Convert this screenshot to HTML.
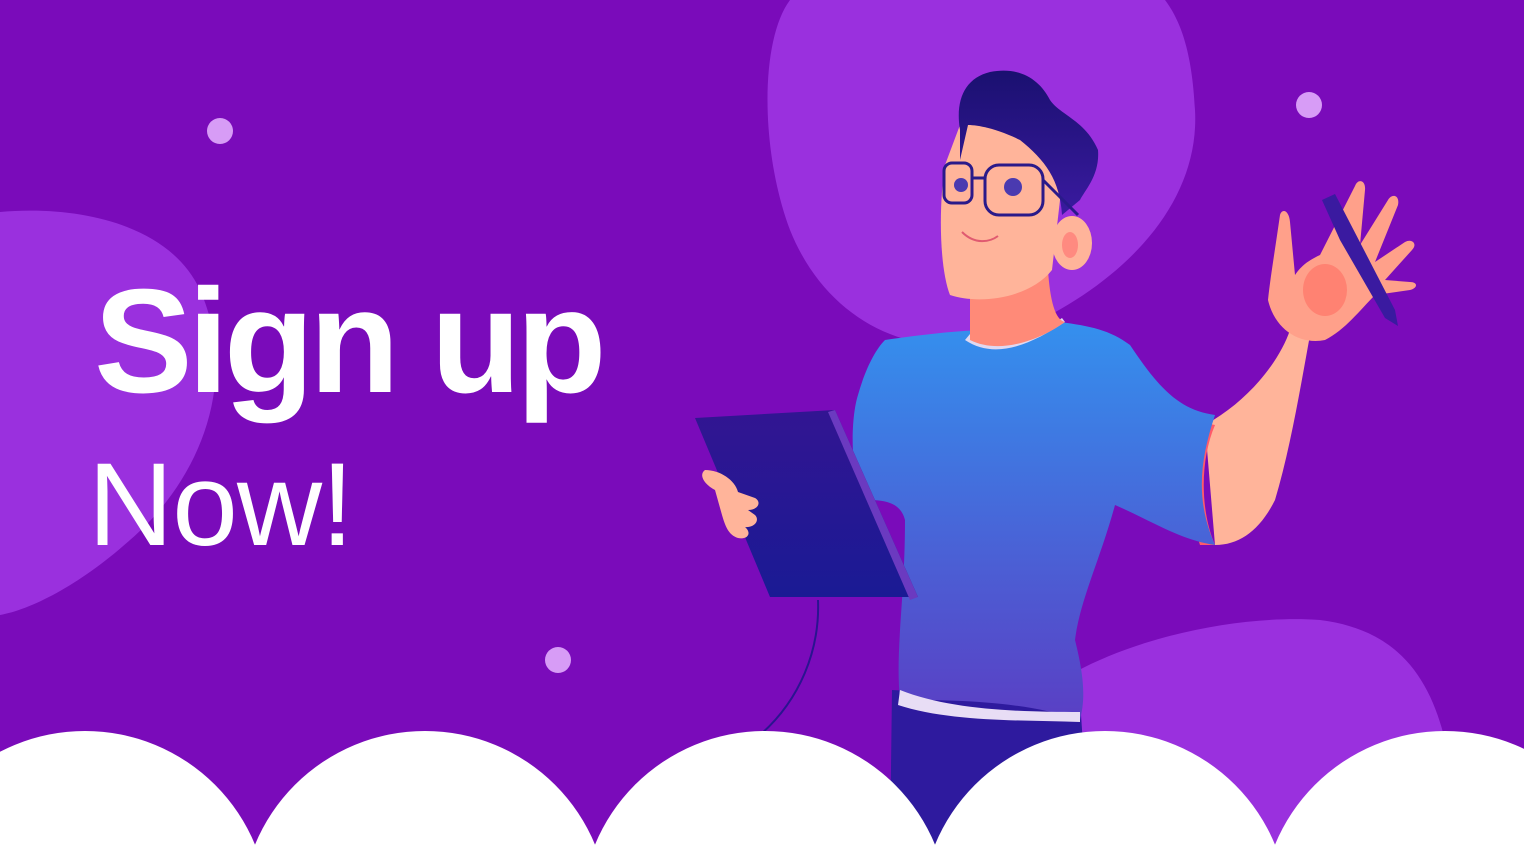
<!DOCTYPE html>
<html><head><meta charset="utf-8"><style>
html,body{margin:0;padding:0;width:1524px;height:847px;overflow:hidden;background:#7a0bba;position:relative}
svg{position:absolute;left:0;top:0;overflow:hidden}
.t{position:absolute;color:#fff;font-family:"Liberation Sans",sans-serif;white-space:nowrap}
</style></head><body>
<svg width="1524" height="847" viewBox="0 0 1524 847">
<defs>
<linearGradient id="sh" x1="0" y1="0" x2="0" y2="1"><stop offset="0" stop-color="#3490ee"/><stop offset="1" stop-color="#5a3fc4"/></linearGradient>
<linearGradient id="tb" x1="0" y1="0" x2="0" y2="1"><stop offset="0" stop-color="#321592"/><stop offset="1" stop-color="#1a1a94"/></linearGradient>
<linearGradient id="hr" x1="0" y1="0" x2="0" y2="1"><stop offset="0" stop-color="#1a1070"/><stop offset="1" stop-color="#3a1aa0"/></linearGradient>
</defs>
<rect width="1524" height="847" fill="#7a0bba"/>
<path d="M790,0 C760,40 760,150 790,230 C830,330 930,370 1020,330 C1130,280 1200,200 1195,110 C1192,50 1180,20 1165,0 Z" fill="#9a30de"/>
<path d="M0,212 C80,205 170,225 200,290 C240,380 200,480 130,540 C80,585 30,610 0,615 Z" fill="#9a30de"/>
<path d="M1075,672 C1150,632 1250,615 1320,620 C1400,630 1430,680 1445,740 L1445,847 L1075,847 Z" fill="#9a30de"/>
<circle cx="220" cy="131" r="13" fill="#d79cf6"/>
<circle cx="1309" cy="105" r="13" fill="#d79cf6"/>
<circle cx="558" cy="660" r="13" fill="#d79cf6"/>
<path d="M818,600 C820,650 800,700 760,735" stroke="#2a1490" stroke-width="2" fill="none"/>
<path d="M892,690 L1080,700 L1090,847 L890,847 Z" fill="#2e1a9e"/>
<path d="M1205,425 C1250,400 1280,360 1290,330 L1310,335 C1300,390 1290,450 1275,500 C1260,530 1240,545 1215,545 Z" fill="#ffb49a"/>
<path d="M1190,420 L1215,425 C1200,460 1200,510 1215,545 L1200,545 C1185,500 1185,460 1190,420 Z" fill="#ff5a6a"/>
<path d="M1280,215 C1275,250 1270,280 1268,300 C1275,330 1300,345 1325,340 C1345,330 1360,310 1375,295 L1410,290 C1418,288 1418,282 1410,282 L1385,280 L1412,250 C1418,244 1412,238 1405,242 L1375,262 L1398,205 C1400,195 1392,193 1388,200 L1360,245 L1365,190 C1366,180 1358,178 1355,186 L1320,255 C1305,262 1300,268 1295,275 L1290,222 C1289,210 1282,208 1280,215 Z" fill="#ffa08a"/>
<ellipse cx="1325" cy="290" rx="22" ry="26" fill="#ff8272"/>
<path d="M1322,200 L1335,194 L1395,310 L1398,326 L1385,318 L1340,240 Z" fill="#3a1aa0"/>
<path d="M885,340 C920,335 960,330 990,330 L1060,322 C1090,326 1110,330 1130,345 C1160,390 1180,410 1215,415 C1200,460 1195,500 1215,545 C1180,540 1150,520 1115,505 C1100,560 1080,600 1075,640 C1085,680 1085,700 1080,720 C1020,700 950,700 900,700 C895,650 905,600 905,520 C900,500 880,500 865,500 C850,480 850,420 858,395 C865,370 875,350 885,340 Z" fill="url(#sh)"/>
<path d="M965,340 C995,360 1030,345 1065,322 L1062,318 C1030,340 1000,352 970,334 Z" fill="#e0d8f0"/>
<path d="M900,690 C950,710 1020,712 1080,712 L1080,722 C1020,720 950,722 898,705 Z" fill="#e8ddf5"/>
<path d="M970,290 L1048,270 C1050,300 1055,320 1065,322 C1040,340 1000,355 970,340 Z" fill="#ff8a78"/>
<ellipse cx="1072" cy="243" rx="20" ry="27" fill="#ffb49a"/>
<ellipse cx="1070" cy="245" rx="8" ry="13" fill="#ff8a80"/>
<path d="M945,165 C938,210 940,270 950,295 C980,305 1030,298 1052,270 L1060,200 C1060,150 1010,115 960,125 Z" fill="#ffb49a"/>
<path d="M960,130 C955,100 965,78 990,72 C1020,66 1040,80 1050,100 C1060,115 1085,120 1098,150 C1100,175 1085,190 1080,200 L1062,215 C1060,180 1045,160 1020,140 C1000,130 980,125 968,125 L960,160 Z" fill="url(#hr)"/>
<g fill="none" stroke="#2a1a8a" stroke-width="3">
<rect x="944" y="163" width="28" height="40" rx="8"/>
<rect x="985" y="165" width="58" height="50" rx="14"/>
<path d="M972,178 L985,178 M1043,180 L1078,215"/>
</g>
<circle cx="1013" cy="187" r="9" fill="#4a3ab0"/>
<circle cx="961" cy="185" r="7" fill="#4a3ab0"/>
<path d="M962,232 C975,245 990,242 998,236" stroke="#e05a70" stroke-width="2" fill="none"/>
<path d="M695,418 L835,410 L918,597 L770,597 Z" fill="url(#tb)"/>
<path d="M835,410 L918,597 L910,600 L828,412 Z" fill="#6b3ac0"/>
<path d="M705,470 C720,470 735,480 738,492 L755,498 C762,502 758,510 748,510 L755,515 C760,520 755,528 745,527 C752,533 748,540 738,538 C728,535 725,525 722,515 L715,490 C705,485 698,475 705,470 Z" fill="#ffb49a"/>
<g fill="#fff">
<circle cx="85" cy="915" r="184"/><circle cx="425" cy="915" r="184"/><circle cx="765" cy="915" r="184"/><circle cx="1105" cy="915" r="184"/><circle cx="1445" cy="915" r="184"/>
</g>
</svg>
<div class="t" style="left:94px;top:268px;font-size:148px;font-weight:bold;letter-spacing:-5px;line-height:1">Sign up</div>
<div class="t" style="left:88px;top:446px;font-size:118px;letter-spacing:-1px;line-height:1">Now!</div>
</body></html>
